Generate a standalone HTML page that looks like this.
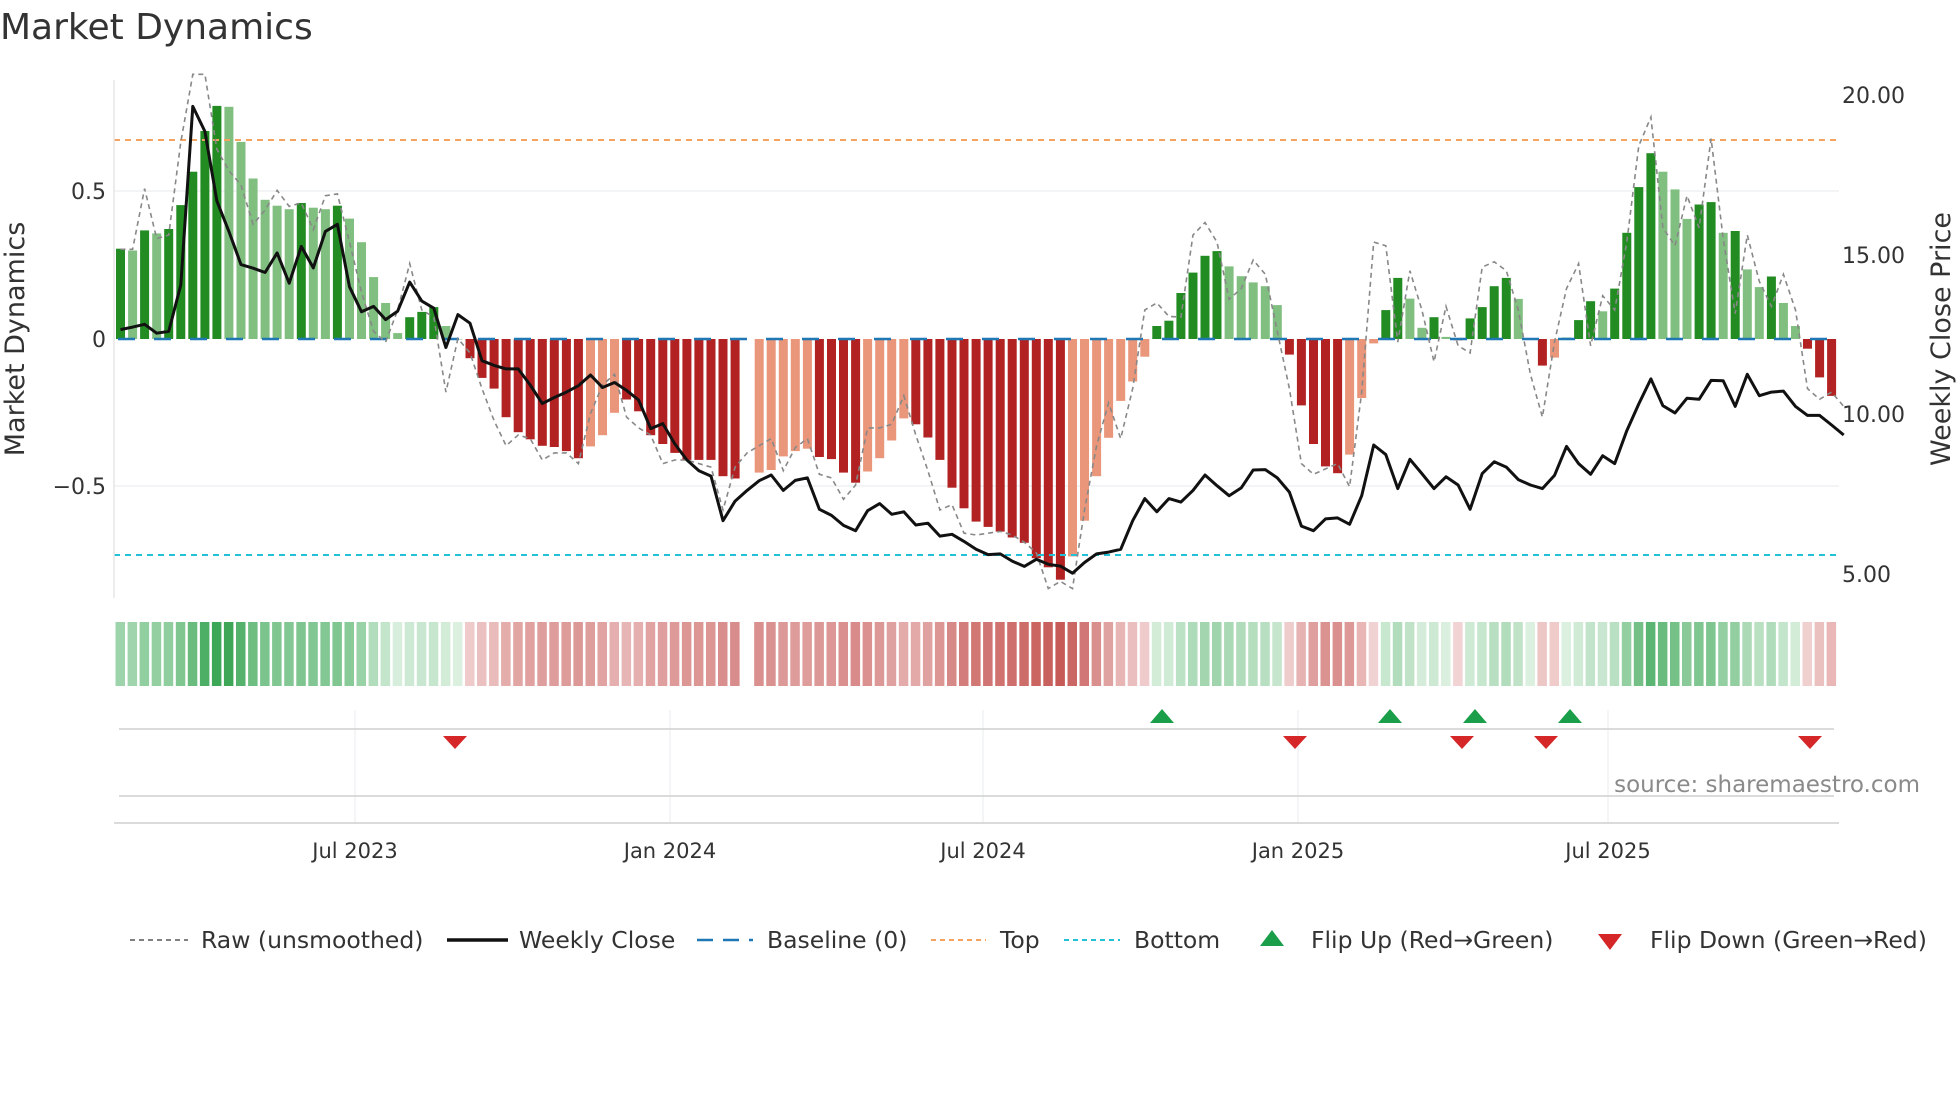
<!DOCTYPE html>
<html><head><meta charset="utf-8"><style>
html,body{margin:0;padding:0;background:#fff;}
svg{display:block;font-family:"DejaVu Sans","Liberation Sans",sans-serif;}
</style></head><body>
<svg id="s" width="1960" height="1102" viewBox="0 0 1960 1102" xmlns="http://www.w3.org/2000/svg">
<rect width="1960" height="1102" fill="#fff"/>
<text x="0" y="39" font-size="36" fill="#333">Market Dynamics</text>
<g id="grid"></g>
<g id="bars"></g>
<g id="lines"></g>
<g id="heat"></g>
<g id="flip"></g>
<line x1="114" y1="80" x2="114" y2="598" stroke="#e6e6e6" stroke-width="1.5"/>
<g font-size="22" fill="#333" text-anchor="end">
<text x="106" y="199">0.5</text>
<text x="106" y="347">0</text>
<text x="106" y="494">−0.5</text>
</g>
<g font-size="22" fill="#333">
<text x="1842" y="103">20.00</text>
<text x="1842" y="263">15.00</text>
<text x="1842" y="422">10.00</text>
<text x="1842" y="582">5.00</text>
</g>
<text transform="translate(24,339) rotate(-90)" font-size="27" fill="#333" text-anchor="middle">Market Dynamics</text>
<text transform="translate(1950,339) rotate(-90)" font-size="27" fill="#333" text-anchor="middle">Weekly Close Price</text>
<g font-size="21" fill="#333" text-anchor="middle">
<text x="355" y="858">Jul 2023</text>
<text x="670" y="858">Jan 2024</text>
<text x="983" y="858">Jul 2024</text>
<text x="1298" y="858">Jan 2025</text>
<text x="1608" y="858">Jul 2025</text>
</g>
<text x="1920" y="792" font-size="23" fill="#8a8a8a" text-anchor="end">source: sharemaestro.com</text>
<g font-size="23.5" fill="#333">
<line x1="130" y1="940" x2="188" y2="940" stroke="#808080" stroke-width="2" stroke-dasharray="5,4"/>
<text x="201" y="948">Raw (unsmoothed)</text>
<line x1="447" y1="940" x2="508" y2="940" stroke="#111" stroke-width="3.5"/>
<text x="519" y="948">Weekly Close</text>
<line x1="697" y1="940" x2="753" y2="940" stroke="#1f77b4" stroke-width="2.5" stroke-dasharray="16,10"/>
<text x="767" y="948">Baseline (0)</text>
<line x1="931" y1="940" x2="986" y2="940" stroke="#f4a460" stroke-width="2" stroke-dasharray="5,4"/>
<text x="1000" y="948">Top</text>
<line x1="1064" y1="940" x2="1120" y2="940" stroke="#22c1d6" stroke-width="2" stroke-dasharray="5,4"/>
<text x="1134" y="948">Bottom</text>
<polygon points="1260,946 1284,946 1272,930" fill="#1a9e4a"/>
<text x="1311" y="948">Flip Up (Red→Green)</text>
<polygon points="1598,934 1622,934 1610,950" fill="#d62728"/>
<text x="1650" y="948">Flip Down (Green→Red)</text>
</g>
</svg>
<script>
var NS="http://www.w3.org/2000/svg";
function el(p,t,a){var e=document.createElementNS(NS,t);for(var k in a)e.setAttribute(k,a[k]);document.getElementById(p).appendChild(e);return e;}
var B="0.306d 0.30l 0.368d 0.358l 0.373d 0.454d 0.567d 0.705d 0.79d 0.787l 0.668l 0.544l 0.472l 0.452l 0.44l 0.461d 0.445l 0.44l 0.452d 0.408l 0.328l 0.21l 0.122l 0.02l 0.074d 0.092d 0.108d 0.044l 0.0l -0.065d -0.132d -0.168d -0.265d -0.316d -0.34d -0.362d -0.366d -0.38d -0.404d -0.364l -0.326l -0.25l -0.205d -0.245d -0.326d -0.356d -0.386d -0.41d -0.41d -0.41d -0.465d -0.473d N -0.453l -0.444l -0.398l -0.38l -0.372l -0.40d -0.407d -0.453d -0.487d -0.449l -0.404l -0.344l -0.269l -0.289d -0.334d -0.41d -0.504d -0.574d -0.619d -0.637d -0.653d -0.673d -0.691d -0.743d -0.774d -0.816d -0.737l -0.616l -0.465l -0.335l -0.21l -0.144l -0.06l 0.044d 0.062d 0.156d 0.225d 0.282d 0.298d 0.246l 0.213l 0.192l 0.179l 0.115l -0.053d -0.225d -0.356d -0.432d -0.455d -0.392l -0.2l -0.015l 0.098d 0.207d 0.137l 0.038l 0.074d 0.007l -0.005l 0.07d 0.108d 0.179d 0.207d 0.136l 0.003l -0.09d -0.063l 0.005l 0.064d 0.128d 0.094l 0.171d 0.36d 0.515d 0.63d 0.567l 0.507l 0.407l 0.456d 0.464d 0.36l 0.366d 0.236l 0.176l 0.212d 0.122l 0.044l -0.033d -0.13d -0.193d".split(" ");
var close=[755,748,740,765,760,630,130,200,395,480,573,583,595,540,625,522,582,480,460,635,705,690,727,703,622,675,695,805,713,737,842,855,865,865,910,962,945,930,912,882,917,903,925,952,1032,1018,1075,1120,1150,1165,1290,1235,1205,1178,1162,1205,1177,1170,1258,1275,1303,1318,1262,1242,1272,1265,1302,1297,1333,1328,1348,1370,1385,1383,1403,1418,1398,1412,1417,1437,1407,1383,1378,1370,1290,1228,1265,1228,1238,1205,1162,1192,1220,1198,1148,1147,1170,1210,1305,1318,1285,1282,1300,1220,1078,1105,1200,1118,1158,1200,1167,1190,1258,1158,1125,1140,1175,1190,1200,1163,1082,1130,1160,1108,1130,1038,963,893,968,988,947,950,897,898,970,880,940,930,927,970,995,995,1022,1050];
var raw=[530,530,360,500,490,230,40,40,250,310,350,460,420,365,410,400,475,380,375,510,650,760,790,700,570,700,720,930,780,820,920,1010,1080,1050,1060,1120,1100,1100,1130,990,910,880,1000,1030,1050,1130,1120,1120,1130,1140,1260,1140,1100,1080,1060,1150,1085,1060,1160,1170,1230,1190,1030,1030,1020,940,1050,1150,1260,1245,1325,1330,1325,1320,1330,1350,1380,1480,1460,1480,1260,1080,960,1060,920,700,680,718,720,490,455,510,670,640,560,600,760,920,1130,1160,1145,1130,1195,930,510,520,790,590,700,845,690,800,820,580,565,590,700,880,1000,790,640,570,800,660,700,510,240,160,470,520,380,470,220,500,710,490,620,690,600,700,920,950,930,970];
var X0=116,P=12.05,W=9,Y0=339,S=295;
[191,486].forEach(function(y){el("grid","line",{x1:114,x2:1839,y1:y,y2:y,stroke:"#eef0f2","stroke-width":1.5});});
function hex(c){return [parseInt(c.substr(1,2),16),parseInt(c.substr(3,2),16),parseInt(c.substr(5,2),16)];}
function mix(a,b,t){a=hex(a);b=hex(b);return "rgb("+a.map(function(v,i){return Math.round(v+(b[i]-v)*t);}).join(",")+")";}
for(var i=0;i<B.length;i++){
  var s=B[i]; if(s==="N") continue;
  var sh=s.slice(-1), v=parseFloat(s);
  var x=X0+i*P, y=Y0-v*S;
  var col = v>=0 ? (sh==="d"?"#228b22":"#80bf80") : (sh==="d"?"#b22222":"#e9967a");
  el("bars","rect",{x:x.toFixed(1),y:Math.min(y,Y0).toFixed(1),width:W,height:Math.max(Math.abs(v*S),0.5).toFixed(1),fill:col});
  var hc = v>=0 ? mix("#dcf0e0","#3aa655",Math.min(v/0.8,1)) : mix("#f2d4d4","#c45552",Math.min(-v/0.85,1));
  el("heat","rect",{x:(x-0.5).toFixed(1),y:622,width:(P-2.6).toFixed(1),height:64,fill:hc});
}
el("lines","line",{x1:114,x2:1839,y1:140,y2:140,stroke:"#f4a460","stroke-width":2,"stroke-dasharray":"6,5"});
el("lines","line",{x1:114,x2:1839,y1:555,y2:555,stroke:"#22c1d6","stroke-width":2,"stroke-dasharray":"6,5"});
el("lines","line",{x1:118,x2:1839,y1:339,y2:339,stroke:"#1f77b4","stroke-width":2.5,"stroke-dasharray":"17,19"});
function pts(a){return a.map(function(z,i){return (X0+W/2+i*P).toFixed(1)+","+(60+z/2.8).toFixed(1);}).join(" ");}
el("lines","polyline",{points:pts(raw),fill:"none",stroke:"#888","stroke-width":1.6,"stroke-dasharray":"5,4"});
el("lines","polyline",{points:pts(close),fill:"none",stroke:"#111","stroke-width":3,"stroke-linejoin":"round"});
[355,670,983,1298,1608].forEach(function(x){el("flip","line",{x1:x,x2:x,y1:710,y2:823,stroke:"#eceef0","stroke-width":1.2});});
el("flip","line",{x1:119,x2:1834,y1:729,y2:729,stroke:"#cfcfcf","stroke-width":1.5});
el("flip","line",{x1:119,x2:1834,y1:796,y2:796,stroke:"#cfcfcf","stroke-width":1.5});
el("flip","line",{x1:114,x2:1839,y1:823,y2:823,stroke:"#cfcfcf","stroke-width":1.5});
[1162,1390,1475,1570].forEach(function(x){el("flip","polygon",{points:(x-12)+",723 "+(x+12)+",723 "+x+",709",fill:"#1a9e4a"});});
[455,1295,1462,1546,1810].forEach(function(x){el("flip","polygon",{points:(x-12)+",736 "+(x+12)+",736 "+x+",749",fill:"#d62728"});});
</script>
</body></html>
